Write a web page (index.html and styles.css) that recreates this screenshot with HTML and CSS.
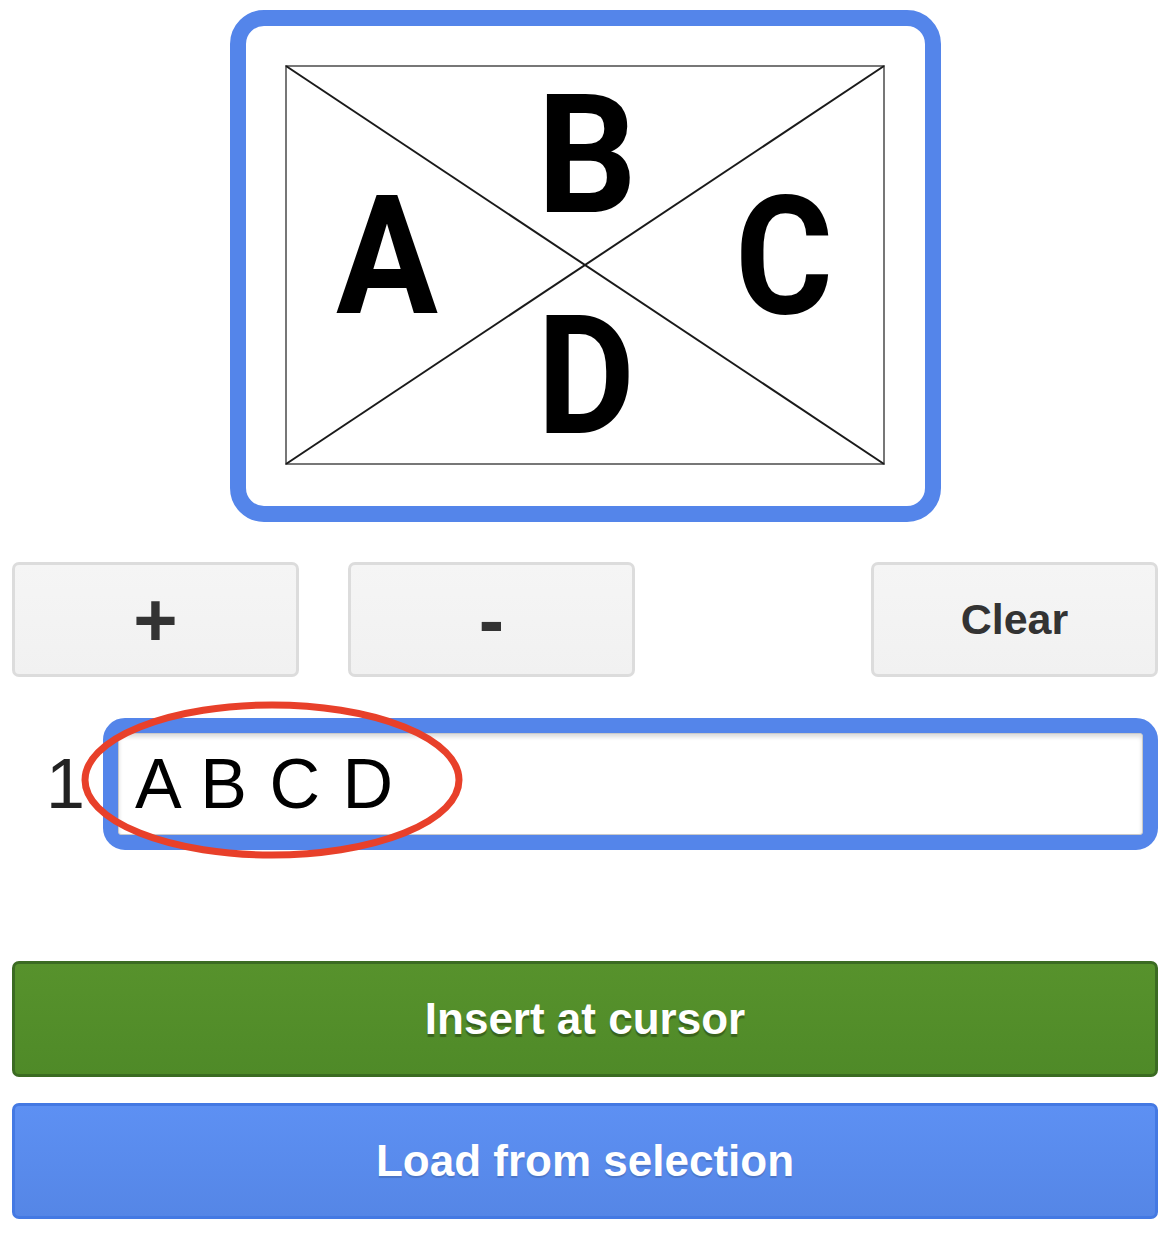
FILE: index.html
```html
<!DOCTYPE html>
<html lang="en">
<head>
    <meta charset="UTF-8">
    <title>Diagram labels</title>
    <link rel="stylesheet" href="styles.css">
</head>
<body>

<div class="sidebar">
    <div class="preview">
        <div class="frame">
            <svg class="picture" width="600" height="400" viewBox="0 0 600 400">
                <rect x="1" y="1" width="598" height="398" fill="#fff" stroke="#777" stroke-width="2"/>
                <line x1="1" y1="1" x2="599" y2="399" stroke="#1a1a1a" stroke-width="2"/>
                <line x1="599" y1="1" x2="1" y2="399" stroke="#1a1a1a" stroke-width="2"/>
                <g class="labels">
                    <text x="51" y="248" textLength="102" lengthAdjust="spacingAndGlyphs">A</text>
                    <text x="252" y="147" textLength="100" lengthAdjust="spacingAndGlyphs">B</text>
                    <text x="450" y="248" textLength="98" lengthAdjust="spacingAndGlyphs">C</text>
                    <text x="252" y="368" textLength="98" lengthAdjust="spacingAndGlyphs">D</text>
                </g>
            </svg>
        </div>
    </div>

    <div class="tools">
        <button class="btn btn-sign">+</button>
        <button class="btn btn-sign">-</button>
        <span class="spacer"></span>
        <button class="btn">Clear</button>
    </div>

    <div class="entry">
        <span class="num">1</span>
        <div class="field">
            <input type="text" value="A B C D">
        </div>
        <svg class="mark" width="390" height="162" viewBox="0 0 390 162">
            <ellipse cx="195" cy="80" rx="187" ry="75" fill="none" stroke="#e8402a" stroke-width="7"/>
        </svg>
    </div>

    <button class="action action-green">Insert at cursor</button>
    <button class="action action-blue">Load from selection</button>
</div>

</body>
</html>
```

FILE: styles.css
```css
* {
    box-sizing: border-box;
}

body {
    margin: 0;
    font-family: 'Liberation Sans', Arial, sans-serif;
    background-color: #fff;
}

.sidebar {
    width: 1170px;
    padding: 10px 12px 0 12px;
    display: flex;
    flex-direction: column;
}

.preview {
    display: flex;
    justify-content: center;
}

.frame {
    border: 16px solid #5485ea;
    border-radius: 34px;
    padding: 39px 40px 41px 39px;
    background: #fff;
}

.picture {
    display: block;
}

.labels text {
    font-family: Roboto, 'Liberation Sans', sans-serif;
    font-weight: 700;
    font-size: 166px;
    fill: #000;
}

.tools {
    display: flex;
    margin-top: 40px;
    gap: 49px;
}

.spacer {
    flex: 1;
}

.btn {
    width: 287px;
    height: 115px;
    border: 3px solid #dcdcdc;
    border-radius: 7px;
    background: linear-gradient(#f5f5f5, #f1f1f1);
    color: #333;
    font-family: 'Liberation Sans', Arial, sans-serif;
    font-weight: 700;
    font-size: 43px;
    padding: 0;
    cursor: pointer;
}

.btn-sign {
    font-size: 76px;
    line-height: 1;
}

.entry {
    position: relative;
    display: flex;
    align-items: center;
    margin-top: 41px;
}

.num {
    width: 91px;
    padding-left: 34px;
    font-size: 70px;
    color: #222;
}

.field {
    flex: 1;
    border: 15px solid #5485ea;
    border-radius: 22px;
}

.field input {
    display: block;
    width: 100%;
    height: 102px;
    border: 1px solid #c9c9c9;
    border-radius: 3px;
    box-shadow: inset 0 3px 4px rgba(0,0,0,0.14);
    padding: 0 14px 0 16px;
    font-family: 'Liberation Sans', Arial, sans-serif;
    font-size: 70px;
    letter-spacing: 1.5px;
    color: #000;
    outline: none;
}

.mark {
    position: absolute;
    left: 65px;
    top: -18px;
}

.action {
    height: 116px;
    border-radius: 7px;
    font-family: 'Liberation Sans', Arial, sans-serif;
    font-weight: 700;
    font-size: 44px;
    color: #fff;
    cursor: pointer;
}

.action-green {
    margin-top: 111px;
    background: linear-gradient(#57922c, #4f8a28);
    border: 3px solid #3b6b22;
    text-shadow: 0 3px 1px rgba(0,0,0,0.3);
}

.action-blue {
    margin-top: 26px;
    background: linear-gradient(#5d90f3, #5586e6);
    border: 3px solid #4479e3;
    text-shadow: 0 2px 1px rgba(0,0,0,0.15);
}
```
